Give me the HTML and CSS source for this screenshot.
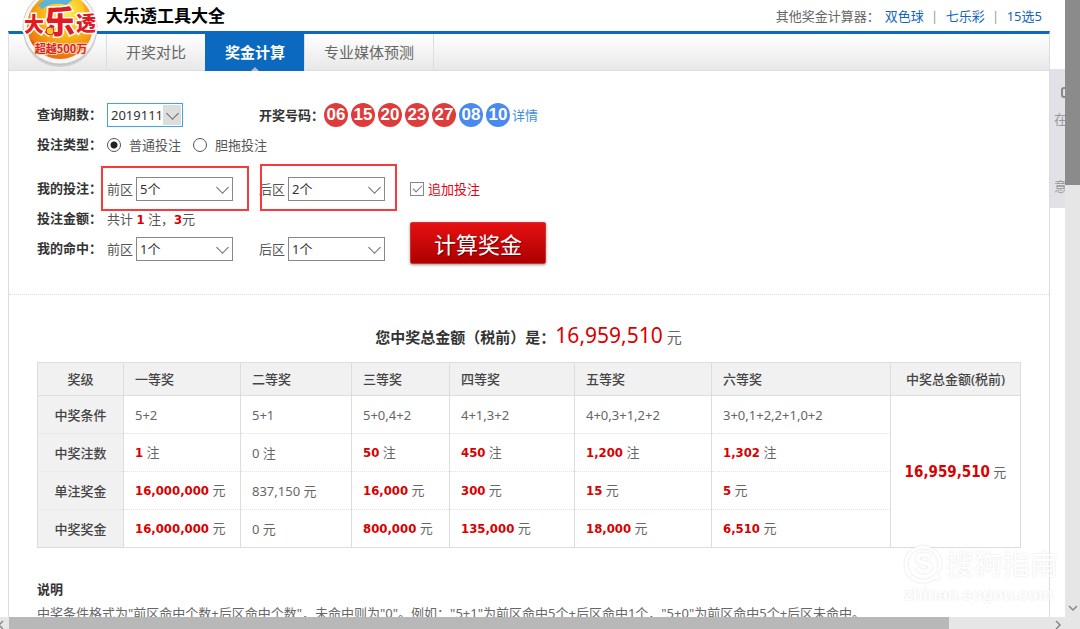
FILE: index.html
```html
<!DOCTYPE html>
<html lang="zh-CN">
<head>
  <meta charset="UTF-8">
  <meta name="viewport" content="width=device-width, initial-scale=1.0">
  <title>大乐透工具大全</title>
  <link rel="stylesheet" href="styles.css">
</head>
<body>
  <div class="window">
    <div class="view">
      <div class="page">
        <header class="top">
          <svg class="logo" viewBox="0 0 84 84" width="84" height="84">
            <defs>
              <radialGradient id="sun" cx="60%" cy="30%" r="75%">
                <stop offset="0" stop-color="#fff04a"/>
                <stop offset="0.5" stop-color="#f9b416"/>
                <stop offset="1" stop-color="#e8650c"/>
              </radialGradient>
              <clipPath id="disc"><circle cx="42" cy="41" r="33"/></clipPath>
            </defs>
            <circle cx="42" cy="45" r="37" fill="#000" opacity="0.12"/>
            <circle cx="42" cy="43" r="37" fill="#bbb"/>
            <circle cx="42" cy="42" r="37" fill="#f6f6f6" stroke="#ccc"/>
            <circle cx="42" cy="41" r="33" fill="url(#sun)"/>
            <g clip-path="url(#disc)">
              <path d="M20 20 Q34 6 56 14 L48 20 Q34 16 24 24Z" fill="#5cb4dc"/>
              <path d="M8 52 Q26 62 30 76 L8 76Z" fill="#e05a10"/>
              <path d="M60 8 Q80 22 78 48 L66 44 Q70 24 60 8Z" fill="#f6a61c"/>
            </g>
            <g class="logo-name">
              <text x="6" y="47" font-size="20">大</text>
              <text x="26" y="48" font-size="31">乐</text>
              <text x="58" y="46" font-size="20">透</text>
            </g>
            <circle cx="32" cy="46" r="4" fill="#ffc426" stroke="#d8232a"/>
            <text class="logo-sub" x="43" y="68" font-size="11" text-anchor="middle">超越500万</text>
          </svg>
          <h1>大乐透工具大全</h1>
          <div class="others">
            <span>其他奖金计算器：</span>
            <a href="#">双色球</a><i>|</i><a href="#">七乐彩</a><i>|</i><a href="#">15选5</a>
          </div>
        </header>

        <main class="box">
          <nav class="tabs">
            <a href="#">开奖对比</a>
            <a href="#" class="on">奖金计算</a>
            <a href="#">专业媒体预测</a>
          </nav>

          <form class="calc">
            <label class="name" for="issue">查询期数：</label>
            <div class="field">
              <span class="select issue"><select id="issue"><option>2019111</option></select></span>
            </div>
            <div class="field wide draw">
              <b>开奖号码：</b>
              <span class="balls">
                <em>06</em><em>15</em><em>20</em><em>23</em><em>27</em><em class="blue">08</em><em class="blue">10</em>
              </span>
              <a href="#">详情</a>
            </div>

            <span class="name">投注类型：</span>
            <div class="field all types">
              <input type="radio" name="type" id="normal" checked><label for="normal">普通投注</label>
              <input type="radio" name="type" id="dantuo"><label for="dantuo">胆拖投注</label>
            </div>

            <span class="name bet">我的投注：</span>
            <div class="field bet">
              <label for="front">前区</label>
              <span class="select"><select id="front"><option>5个</option></select></span>
            </div>
            <div class="field bet">
              <label for="back">后区</label>
              <span class="select"><select id="back"><option>2个</option></select></span>
            </div>
            <div class="field bet add">
              <input type="checkbox" id="extra" checked><label for="extra">追加投注</label>
            </div>

            <span class="name">投注金额：</span>
            <div class="field sum"><span>共计 <strong>1</strong> 注，<strong>3</strong>元</span></div>
            <button type="button" class="go">计算奖金</button>

            <span class="name hit">我的命中：</span>
            <div class="field">
              <label for="hit-front">前区</label>
              <span class="select"><select id="hit-front"><option>1个</option></select></span>
            </div>
            <div class="field">
              <label for="hit-back">后区</label>
              <span class="select"><select id="hit-back"><option>1个</option></select></span>
            </div>

            <span class="mark mark-front"></span>
            <span class="mark mark-back"></span>
          </form>

          <section class="result">
            <h2>您中奖总金额（税前）是：<span class="total">16,959,510</span> <small>元</small></h2>
            <table>
              <colgroup>
                <col class="c1"><col class="c2"><col class="c3"><col class="c4">
                <col class="c5"><col class="c6"><col class="c7"><col class="c8">
              </colgroup>
              <thead>
                <tr>
                  <th class="center">奖级</th><th>一等奖</th><th>二等奖</th><th>三等奖</th>
                  <th>四等奖</th><th>五等奖</th><th>六等奖</th><th class="center">中奖总金额(税前)</th>
                </tr>
              </thead>
              <tbody>
                <tr>
                  <th>中奖条件</th><td>5+2</td><td>5+1</td><td>5+0,4+2</td>
                  <td>4+1,3+2</td><td>4+0,3+1,2+2</td><td>3+0,1+2,2+1,0+2</td>
                  <td class="all-total" rowspan="4"><strong>16,959,510</strong> 元</td>
                </tr>
                <tr>
                  <th>中奖注数</th><td><strong>1</strong> 注</td><td>0 注</td><td><strong>50</strong> 注</td>
                  <td><strong>450</strong> 注</td><td><strong>1,200</strong> 注</td><td><strong>1,302</strong> 注</td>
                </tr>
                <tr>
                  <th>单注奖金</th><td><strong>16,000,000</strong> 元</td><td>837,150 元</td><td><strong>16,000</strong> 元</td>
                  <td><strong>300</strong> 元</td><td><strong>15</strong> 元</td><td><strong>5</strong> 元</td>
                </tr>
                <tr>
                  <th>中奖奖金</th><td><strong>16,000,000</strong> 元</td><td>0 元</td><td><strong>800,000</strong> 元</td>
                  <td><strong>135,000</strong> 元</td><td><strong>18,000</strong> 元</td><td><strong>6,510</strong> 元</td>
                </tr>
              </tbody>
            </table>
          </section>

          <section class="note">
            <h3>说明</h3>
            <p>中奖条件格式为"前区命中个数+后区命中个数"，未命中则为"0"。例如："5+1"为前区命中5个+后区命中1个，"5+0"为前区命中5个+后区未命中。</p>
          </section>
        </main>
      </div>

      <aside class="side">
        <svg width="10" height="14" viewBox="0 0 10 14"><rect x="1" y="2" width="12" height="9" rx="2" fill="none" stroke="#888" stroke-width="2"/></svg>
        <a href="#">在线</a>
        <a href="#" class="last">意见</a>
      </aside>
    </div>

    <div class="vbar">
      <div class="vthumb"></div>
      <svg width="15" height="18" viewBox="0 0 15 18"><path d="M4 7l4 4 4-4" fill="none" stroke="#888" stroke-width="1.5"/></svg>
    </div>
    <div class="hbar">
      <svg width="9" height="12" viewBox="0 0 9 12"><path d="M3 4l-4 4 4 4" fill="none" stroke="#888" stroke-width="1.5"/></svg>
      <div class="hthumb"></div>
      <svg class="right" width="9" height="12" viewBox="0 0 9 12"><path d="M3 4l4 4-4 4" fill="none" stroke="#888" stroke-width="1.5"/></svg>
    </div>

    <div class="watermark">
      <svg width="42" height="42" viewBox="0 0 42 42" fill="none" stroke="#fff" stroke-width="3">
        <path d="M33 31A17 17 0 1 1 36 20Q36 25 34 28M31 36l4-3"/>
        <path d="M26 14Q18 9 14 14Q12 19 20 20Q28 21 26 26Q21 31 13 26" stroke-width="4"/>
      </svg>
      <span>搜狗指南</span>
      <small>zhinan.sogou.com</small>
    </div>
  </div>
</body>
</html>
```
FILE: styles.css
```css
* {
  margin: 0;
  padding: 0;
  box-sizing: border-box;
}

body {
  font: 13px/20px "Noto Sans", "Noto Sans CJK SC", sans-serif;
  color: #555;
  background: #fff;
}

a {
  color: #1265bd;
  text-decoration: none;
}

i, em {
  font-style: normal;
}

strong {
  font-family: "DejaVu Sans Condensed", "Noto Sans CJK SC", sans-serif;
  color: #d90000;
}

.window {
  position: relative;
  display: grid;
  grid-template-columns: 1fr 15px;
  grid-template-rows: minmax(0, 1fr) 12px;
  height: 100vh;
  overflow: hidden;
}

.view {
  position: relative;
  overflow: hidden;
}

.page {
  margin: 0 15px 0 8px;
}

/* header */
.top {
  position: relative;
  display: flex;
  align-items: center;
  justify-content: space-between;
  height: 31px;
  padding: 0 8px 0 98px;
}

.logo {
  position: absolute;
  left: 10px;
  top: -15px;
  z-index: 2;
}

.logo-name {
  font-family: "Noto Sans CJK SC", sans-serif;
  font-weight: 900;
  fill: #e01b22;
  stroke: #fff;
  stroke-width: 3px;
  paint-order: stroke;
}

.logo-sub {
  font-family: "Noto Sans CJK SC", sans-serif;
  font-weight: bold;
  fill: #d8232a;
  stroke: #fbd9b0;
  stroke-width: 2px;
  paint-order: stroke;
}

h1 {
  font-size: 17px;
  line-height: 30px;
  color: #000;
}

.others {
  display: flex;
  line-height: 32px;
}

.others span {
  margin-right: 5px;
  color: #666;
}

.others i {
  width: 22px;
  text-align: center;
  color: #999;
}

.box {
  border: 1px solid #ddd;
  border-top: 3px solid #0b69c0;
}

.tabs {
  display: flex;
  height: 37px;
  padding-left: 97px;
  background: linear-gradient(#fff, #e8e8e8);
  border-bottom: 1px solid #ddd;
}

.tabs a {
  padding: 0 19px;
  border-left: 1px solid #ddd;
  font-size: 15px;
  line-height: 36px;
  color: #666;
}

.tabs a:last-child {
  border-right: 1px solid #ddd;
}

.tabs .on {
  position: relative;
  height: 37px;
  border-color: #0b69c0;
  background: #0b69c0;
  color: #fff;
  font-weight: bold;
}

.tabs .on::after {
  content: "";
  position: absolute;
  left: 50%;
  bottom: 0;
  margin-left: -4px;
  border: 4px solid transparent;
  border-top: 0;
  border-bottom-color: #bbb;
}

/* form */
.calc {
  position: relative;
  display: grid;
  grid-template-columns: 70px 152px 151px 1fr;
  grid-template-rows: 30px 30px 44px 30px 30px;
  padding: 29px 28px 30px;
  border-bottom: 1px dotted #ddd;
}

.name, .draw b {
  font-weight: bold;
  line-height: 29px;
  color: #333;
  white-space: nowrap;
}

.field {
  display: flex;
  align-items: center;
  white-space: nowrap;
}

.wide {
  grid-column: 3 / 5;
}

.all {
  grid-column: 2 / 5;
}

.bet {
  margin-top: 14px;
  height: 30px;
}

.select {
  position: relative;
  width: 97px;
  margin-left: 3px;
}

.select select {
  display: block;
  width: 100%;
  height: 24px;
  padding-left: 3px;
  appearance: none;
  border: 1px solid #888;
  border-radius: 0;
  background: #fff;
  font: inherit;
  color: #333;
}

.select::after {
  content: "";
  position: absolute;
  right: 6px;
  top: 6px;
  width: 8px;
  height: 8px;
  border: solid #666;
  border-width: 0 1px 1px 0;
  transform: rotate(45deg);
}

.issue {
  width: 76px;
  margin-left: 0;
}

.issue select {
  padding: 1px 1px 1px 3px;
  border-color: #3ba9dc;
  background: linear-gradient(90deg, #fff 56px, #ddd 56px);
  background-clip: content-box;
  background-origin: border-box;
}

.balls {
  display: flex;
  gap: 3px;
  margin-right: 2px;
}

.balls em {
  width: 24px;
  border-radius: 50%;
  background: #df3b3b;
  font: bold 17px/24px "Liberation Sans", sans-serif;
  color: #fff;
  text-align: center;
}

.balls .blue {
  background: #4a8af0;
}

.draw a {
  color: #3d8ee0;
}

.types label {
  margin: 0 12px 0 8px;
}

input[type="radio"] {
  width: 14px;
  height: 14px;
  appearance: none;
  border: 1px solid #555;
  border-radius: 50%;
}

input[type="radio"]:checked {
  background: radial-gradient(#222 0 3px, #fff 4px);
}

.add {
  color: #e60012;
}

input[type="checkbox"] {
  position: relative;
  width: 14px;
  height: 14px;
  margin-right: 4px;
  appearance: none;
  border: 1px solid #888;
}

input[type="checkbox"]::after {
  content: "";
  position: absolute;
  left: 2px;
  top: 2px;
  width: 8px;
  height: 4px;
  border: solid #777;
  border-width: 0 0 1px 1px;
  transform: rotate(-45deg);
}

.sum {
  grid-column: 2 / 4;
}

.go {
  grid-column: 4;
  grid-row: 4 / 6;
  align-self: end;
  width: 136px;
  height: 42px;
  border: 1px solid #c33;
  border-radius: 2px;
  background: linear-gradient(#e61010, #ac0000);
  box-shadow: 0 1px 3px #999;
  font: 22px/38px "Noto Sans CJK SC", sans-serif;
  color: #fff;
  text-shadow: 1px 1px 1px #700;
}

.hit {
  grid-column: 1;
}

/* highlight boxes */
.mark {
  position: absolute;
  top: 95px;
  left: 92px;
  width: 148px;
  height: 45px;
  border: 2px solid #f93a3a;
}

.mark-back {
  top: 93px;
  left: 251px;
  width: 137px;
  height: 47px;
}

/* result */
.result {
  padding: 24px 29px 0 28px;
}

h2 {
  height: 43px;
  font-size: 15px;
  line-height: 32px;
  text-align: center;
  color: #333;
}

h2 .total {
  font-size: 21px;
  font-weight: normal;
  color: #d90000;
}

h2 small {
  font-size: 15px;
  font-weight: normal;
  color: #666;
}

table {
  width: 100%;
  table-layout: fixed;
  border-collapse: collapse;
  border: 1px solid #ddd;
}

.c1 { width: 86px; }
.c2 { width: 117px; }
.c3 { width: 111px; }
.c4 { width: 98px; }
.c5 { width: 125px; }
.c6 { width: 137px; }
.c7 { width: 179px; }
.c8 { width: 130px; }

th, td {
  height: 38px;
  padding: 0 0 0 11px;
  border-right: 1px solid #ddd;
  border-bottom: 1px dotted #e3e3e3;
  text-align: left;
  white-space: nowrap;
  color: #666;
}

th {
  background: #f1f1f1;
  font-weight: 500;
  color: #444;
}

thead th {
  height: 33px;
  border-bottom: 1px solid #ddd;
}

tbody th, th.center, .all-total {
  padding: 0;
  text-align: center;
}

.all-total strong {
  font-size: 15px;
}

/* note */
.note {
  padding: 31px 28px 40px;
}

h3 {
  font-size: 13px;
  line-height: 20px;
  color: #333;
}

.note p {
  padding-top: 4px;
  white-space: nowrap;
  color: #666;
}

/* side widget */
.side {
  position: absolute;
  top: 69px;
  right: 0;
  width: 15px;
  height: 139px;
  padding: 17px 0 0 4px;
  overflow: hidden;
  background: #e1e2e8;
}

.side svg {
  display: block;
  margin-left: 7px;
}

.side a {
  display: block;
  margin-top: 9px;
  white-space: nowrap;
  color: #999;
}

.side .last {
  margin-top: 47px;
}

/* scrollbars */
.vbar {
  display: flex;
  flex-direction: column;
  justify-content: space-between;
  background: #e6e6e6;
}

.vthumb {
  height: 30%;
  background: #8b8b8b;
}

.hbar {
  grid-column: 1 / 3;
  display: flex;
  background: #e6e6e6;
}

.hthumb {
  width: 87%;
  background: #b8b8b8;
}

.hbar .right {
  margin: 0 18px 0 auto;
}

/* watermark */
.watermark {
  position: absolute;
  right: 22px;
  bottom: 24px;
  display: grid;
  grid-template-columns: 42px auto;
  align-items: center;
  color: #fff;
  text-shadow: 0 0 2px #ddd;
}

.watermark svg {
  filter: drop-shadow(0 0 1px #ddd);
}

.watermark span {
  font-size: 28px;
  line-height: 40px;
}

.watermark small {
  grid-column: 1 / 3;
  font: bold 17px/20px "Liberation Sans", sans-serif;
}
```
